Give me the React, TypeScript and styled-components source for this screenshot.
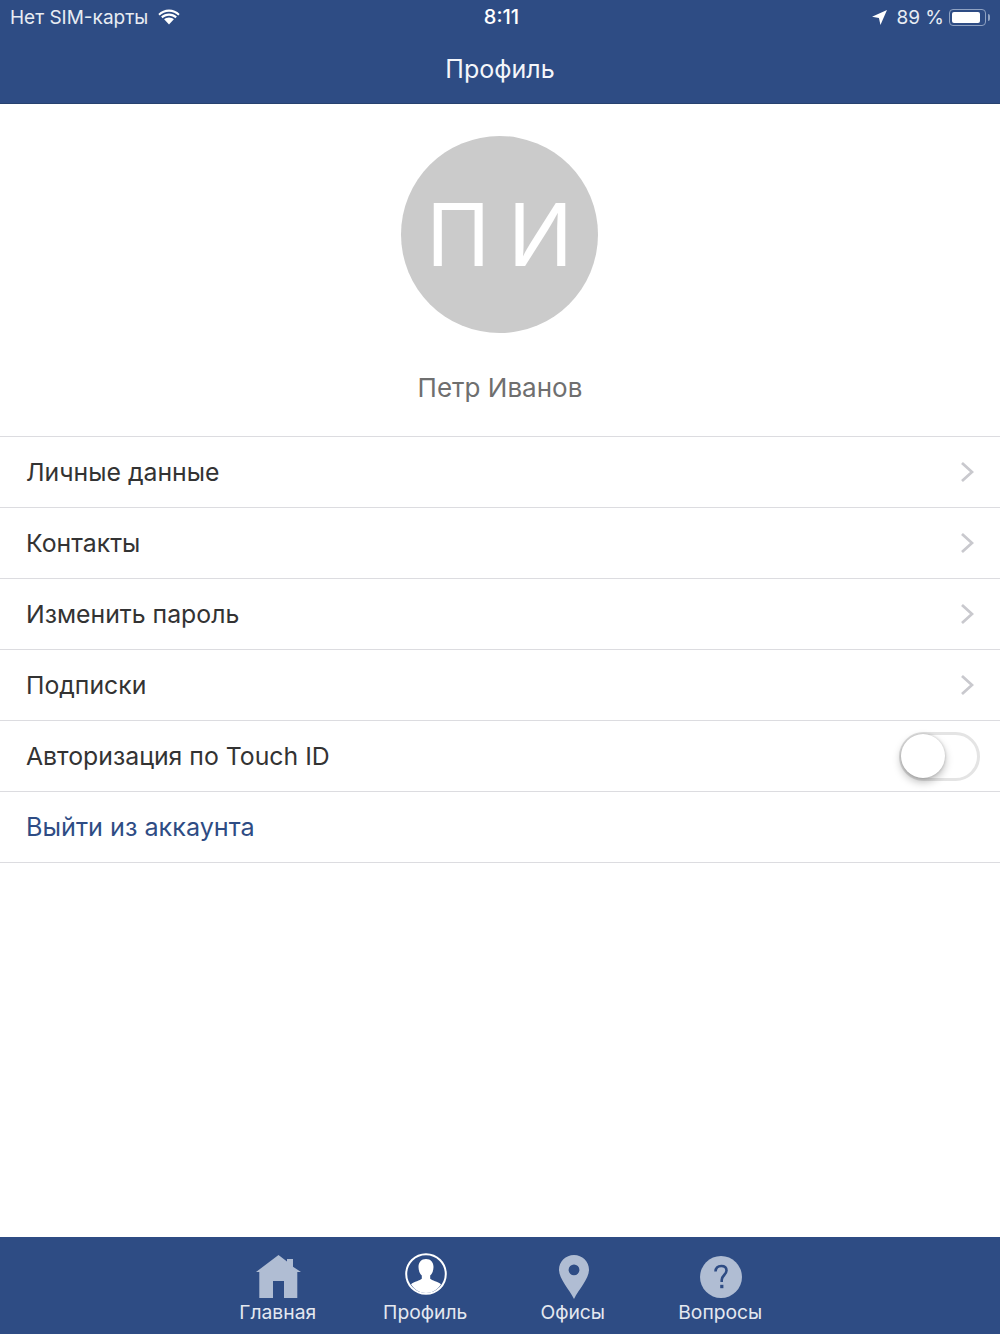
import React from 'react'
import styled, { createGlobalStyle } from 'styled-components'

const Global = createGlobalStyle`
  html, body {
    margin: 0;
    padding: 0;
    background: #fff;
    font-family: Inter, "Noto Sans", sans-serif;
  }
`

const Page = styled.div`
  width: 1000px;
  height: 1334px;
  display: flex;
  flex-direction: column;
  overflow: hidden;
`

const Header = styled.header`
  height: 104px;
  flex: none;
  background: #2e4c84;
  color: #fff;
  display: flex;
  flex-direction: column;
  box-sizing: border-box;
  border-bottom: 1px solid #27426f;
`

const StatusBar = styled.div`
  height: 34px;
  display: grid;
  grid-template-columns: 1fr auto 1fr;
  align-items: center;
  padding: 0 10px;
  font-size: 19px;
  color: #e8ecf3;
`

const StatusSide = styled.div<{ $end?: boolean }>`
  display: flex;
  align-items: center;
  justify-content: ${p => (p.$end ? 'flex-end' : 'flex-start')};
  gap: 9px;
`

const Clock = styled.div`
  font-size: 20px;
  font-weight: 500;
  color: #fff;
  padding-left: 3px;
`

const Battery = styled.div`
  width: 37px;
  height: 17px;
  border: 1px solid #8fa2c2;
  border-radius: 4px;
  box-sizing: border-box;
  padding: 2px;
  position: relative;
  margin-left: -3px;
  margin-right: 4px;

  &::before {
    content: '';
    display: block;
    width: 90%;
    height: 100%;
    background: #fff;
    border-radius: 2px;
  }

  &::after {
    content: '';
    position: absolute;
    right: -5px;
    top: 4px;
    width: 2px;
    height: 7px;
    background: #8fa2c2;
    border-radius: 0 2px 2px 0;
  }
`

const Percent = styled.span`
  margin-right: -1px;
`

const Title = styled.h1`
  margin: 0;
  flex: 1;
  display: flex;
  align-items: center;
  justify-content: center;
  font-size: 25px;
  font-weight: 400;
  color: #f4f6fa;
`

const Main = styled.main`
  flex: 1;
  background: #fff;
`

const ProfileHead = styled.section`
  height: 332px;
  box-sizing: border-box;
  padding-top: 32px;
  display: flex;
  flex-direction: column;
  align-items: center;
`

const Avatar = styled.div`
  width: 197px;
  height: 197px;
  margin-right: 1px;
  border-radius: 50%;
  background: #cbcbcb;
  color: #fff;
  display: flex;
  align-items: center;
  justify-content: center;
  gap: 18px;
  font-size: 86px;
  font-weight: 400;
  line-height: 1;
`

const Name = styled.div`
  margin-top: 39px;
  font-size: 26px;
  line-height: 32px;
  color: #6f6f6f;
`

const Menu = styled.ul`
  list-style: none;
  margin: 0;
  padding: 0;
  border-top: 1px solid #dcdce0;
`

const Row = styled.li`
  height: 71px;
  box-sizing: border-box;
  border-bottom: 1px solid #dcdce0;
  display: flex;
  align-items: center;
  justify-content: space-between;
  padding: 0 20px 1px 26px;
`

const RowLabel = styled.span<{ $link?: boolean }>`
  font-size: ${p => (p.$link ? '25.2px' : '24.8px')};
  color: ${p => (p.$link ? '#2e4c84' : '#333333')};
`

const ChevronWrap = styled.span`
  display: flex;
  margin-right: 6px;
  margin-top: 1px;
`

const Toggle = styled.div`
  width: 81px;
  height: 49px;
  box-sizing: border-box;
  border: 3px solid #e4e4e4;
  border-radius: 25px;
  margin-top: 1px;
  position: relative;
`

const Knob = styled.div`
  position: absolute;
  left: -1px;
  top: -1px;
  width: 44px;
  height: 44px;
  border-radius: 50%;
  background: #fff;
  box-shadow: 0 4px 9px rgba(0, 0, 0, 0.27), 0 0 3px rgba(0, 0, 0, 0.2);
`

const TabBar = styled.nav`
  height: 97px;
  flex: none;
  box-sizing: border-box;
  background: #2e4c84;
  display: flex;
  justify-content: center;
  padding: 16px 2px 0 0;
`

const Tab = styled.div`
  width: 147.5px;
  display: flex;
  flex-direction: column;
  align-items: center;
  color: #e4e8f0;
  font-size: 19.3px;
`

const TabIcon = styled.div<{ $top: number }>`
  height: 47px;
  box-sizing: border-box;
  margin-left: 2px;
  padding-top: ${p => p.$top}px;
  display: flex;
  align-items: flex-start;
  justify-content: center;
`

const TabLabel = styled.span`
  line-height: 24px;
`

const Chevron = () => (
  <ChevronWrap>
    <svg width="14" height="22" viewBox="0 0 14 22" fill="none">
      <path d="M2 2l10 9-10 9" stroke="#c9c9ce" strokeWidth="2.8" />
    </svg>
  </ChevronWrap>
)

const Wifi = () => (
  <svg width="24" height="16" viewBox="0 0 24 18" fill="#fff">
    <path d="M12 3C8 3 4.300 4.600 1.500 7.200L0 5.500C3.200 2.400 7.400.5 12 .5s8.800 1.900 12 5l-1.500 1.700C19.700 4.600 16 3 12 3z" />
    <path d="M12 7.500c-2.800 0-5.300 1.100-7.200 2.800L3.100 8.500C5.500 6.400 8.600 5 12 5s6.500 1.400 8.900 3.500l-1.700 1.800C17.300 8.600 14.800 7.500 12 7.500z" />
    <path d="M12 9.500c-2.100 0-4.100.8-5.500 2.100L12 17.500l5.500-5.900C16.100 10.300 14.100 9.500 12 9.500z" />
  </svg>
)

const Location = () => (
  <svg width="15" height="15" viewBox="0 0 16 16" fill="#fff">
    <path d="M16 0L0 7.200l7.400 1.400L9 16z" />
  </svg>
)

const HomeIcon = () => (
  <svg width="45" height="43" viewBox="0 0 45 43" fill="#b0bdd3">
    <path d="M22.500 0L31 6.400V4h6v7.700L45 17h-3.700v26H28V26H17v17H3.300V17H0z" />
  </svg>
)

const ProfileIcon = () => (
  <svg width="42" height="42" viewBox="0 0 42 42">
    <circle cx="21" cy="21" r="19.800" fill="none" stroke="#fff" strokeWidth="2" />
    <path
      fill="#fff"
      d="M21 6c-4.800 0-7.500 3.500-7.500 8 0 3.500 1.300 6.700 3.300 8.600v3.200c-1.500 1.500-7.800 3-10.800 5.500C9.500 36.900 15 40 21 40s11.500-3.100 15-8.700c-3-2.500-9.300-4-10.800-5.500v-3.200c2-1.900 3.300-5.100 3.300-8.600 0-4.500-2.700-8-7.500-8z"
    />
  </svg>
)

const PinIcon = () => (
  <svg width="30" height="44" viewBox="0 0 30 44">
    <path
      fill="#b0bdd3"
      fillRule="evenodd"
      d="M15 0C6.700 0 0 6.500 0 14.700 0 24 10 34 15 44c5-10 15-20 15-29.300C30 6.500 23.300 0 15 0zm0 9.500a5.400 5.400 0 1 1 0 10.800 5.400 5.400 0 0 1 0-10.800z"
    />
  </svg>
)

const HelpIcon = () => (
  <svg width="42" height="42" viewBox="0 0 42 42">
    <circle cx="21" cy="21" r="21" fill="#b0bdd3" />
    <path
      d="M15.500 15.500c.2-3.500 2.500-5.500 5.800-5.500 3.300 0 5.200 2 5.200 4.600 0 4.200-4.800 4.700-4.800 9.400v2"
      fill="none"
      stroke="#2e4c84"
      strokeWidth="2.600"
    />
    <rect x="20.200" y="28.800" width="3.200" height="3.400" fill="#2e4c84" />
  </svg>
)

const items = ['Личные данные', 'Контакты', 'Изменить пароль', 'Подписки']

const tabs = [
  { label: 'Главная', icon: <HomeIcon />, top: 2 },
  { label: 'Профиль', icon: <ProfileIcon />, top: 0 },
  { label: 'Офисы', icon: <PinIcon />, top: 2 },
  { label: 'Вопросы', icon: <HelpIcon />, top: 3 }
]

const App = () => (
  <Page>
    <Global />
    <Header>
      <StatusBar>
        <StatusSide>
          <span>Нет SIM-карты</span>
          <Wifi />
        </StatusSide>
        <Clock>8:11</Clock>
        <StatusSide $end>
          <Location />
          <Percent>89 %</Percent>
          <Battery />
        </StatusSide>
      </StatusBar>
      <Title>Профиль</Title>
    </Header>
    <Main>
      <ProfileHead>
        <Avatar>
          <span>П</span>
          <span>И</span>
        </Avatar>
        <Name>Петр Иванов</Name>
      </ProfileHead>
      <Menu>
        {items.map(item => (
          <Row key={item}>
            <RowLabel>{item}</RowLabel>
            <Chevron />
          </Row>
        ))}
        <Row>
          <RowLabel>Авторизация по Touch ID</RowLabel>
          <Toggle>
            <Knob />
          </Toggle>
        </Row>
        <Row>
          <RowLabel $link>Выйти из аккаунта</RowLabel>
        </Row>
      </Menu>
    </Main>
    <TabBar>
      {tabs.map(tab => (
        <Tab key={tab.label}>
          <TabIcon $top={tab.top}>{tab.icon}</TabIcon>
          <TabLabel>{tab.label}</TabLabel>
        </Tab>
      ))}
    </TabBar>
  </Page>
)

export default App
